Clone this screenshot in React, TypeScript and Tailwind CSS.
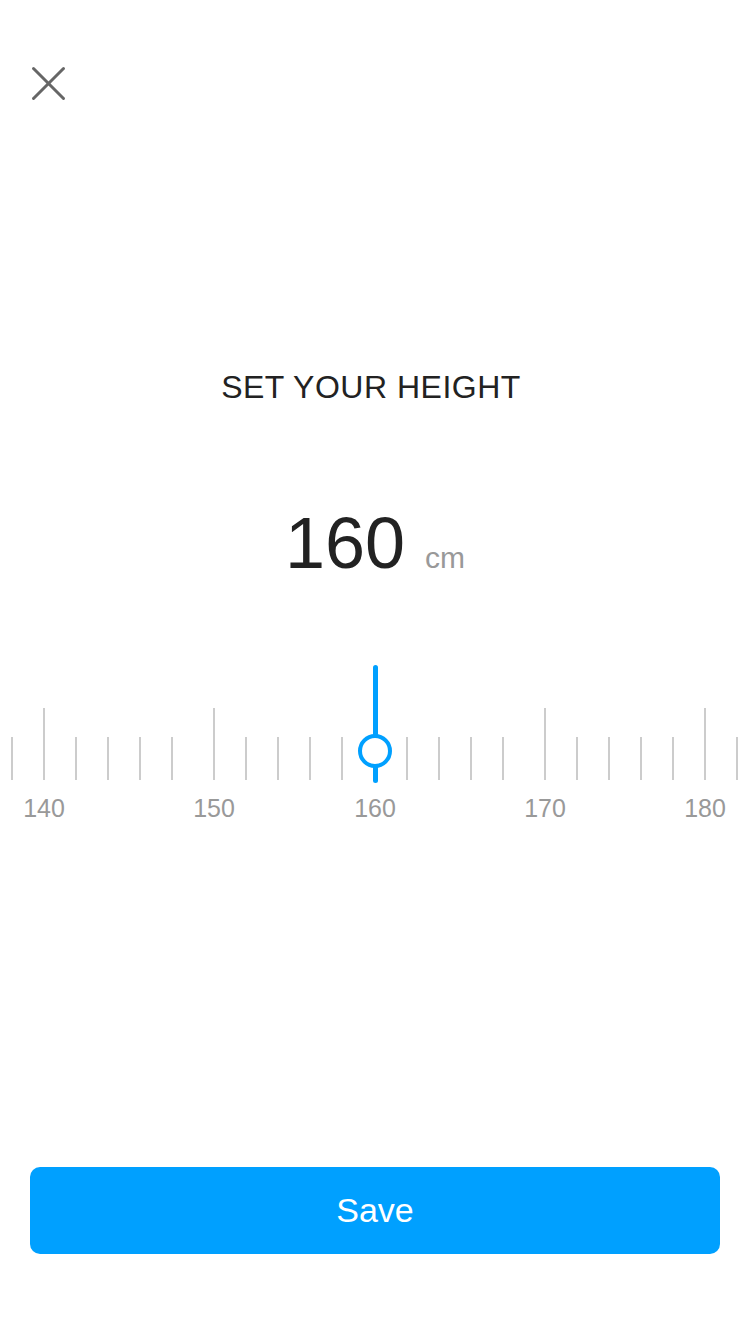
import React from "react";

const ticks = [12, 44, 76, 108, 140, 172, 214, 246, 278, 310, 342, 375, 407, 439, 471, 503, 545, 577, 609, 641, 673, 705, 737];
const majors = new Set([44, 214, 375, 545, 705]);
const labels = [
  { x: 44, t: "140" },
  { x: 214, t: "150" },
  { x: 375, t: "160" },
  { x: 545, t: "170" },
  { x: 705, t: "180" },
];

export default function App() {
  return (
    <div
      className="w-[750px] h-[1334px] bg-white flex flex-col overflow-hidden"
      style={{ fontFamily: '"Liberation Sans", Arial, sans-serif' }}
    >
      <div className="pt-[66px] pl-[31px]">
        <svg width="35" height="35" viewBox="0 0 35 35" fill="none">
          <line x1="2.5" y1="2.5" x2="32.5" y2="32.5" stroke="#666666" strokeWidth="3" strokeLinecap="round" />
          <line x1="32.5" y1="2.5" x2="2.5" y2="32.5" stroke="#666666" strokeWidth="3" strokeLinecap="round" />
        </svg>
      </div>

      <div className="mt-[268px] pr-[8px] text-center text-[32px] leading-[36px] tracking-[0.5px] text-[#222222]">
        SET YOUR HEIGHT
      </div>

      <div className="mt-[102px] h-[72px] flex justify-center items-baseline">
        <span className="text-[72px] leading-[72px] text-[#222222]">160</span>
        <span className="ml-[20px] text-[30px] leading-[72px] text-[#999999]">cm</span>
      </div>

      <div className="mt-[129px] relative h-[72px]">
        {ticks.map((x) =>
          x === 375 ? null : (
            <div
              key={x}
              className={`absolute bottom-0 w-[2px] bg-[#cccccc] ${majors.has(x) ? "h-[72px]" : "h-[43px]"}`}
              style={{ left: x - 1 }}
            />
          )
        )}
        <div className="absolute left-[372.5px] top-[-43px] w-[5px] h-[118px] rounded-full bg-[#00a0ff]" />
        <div className="absolute left-[358px] top-[26px] w-[34px] h-[34px] rounded-full border-[4px] border-[#00a0ff] bg-white" />
      </div>

      <div className="mt-[13px] relative h-[30px]">
        {labels.map((l) => (
          <span
            key={l.t}
            className="absolute top-0 -translate-x-1/2 text-[25px] leading-[30px] text-[#999999]"
            style={{ left: l.x }}
          >
            {l.t}
          </span>
        ))}
      </div>

      <div className="mt-auto mb-[80px] mx-[30px] h-[87px] rounded-[10px] bg-[#00a0ff] flex items-center justify-center">
        <span className="text-[34px] text-white">Save</span>
      </div>
    </div>
  );
}
